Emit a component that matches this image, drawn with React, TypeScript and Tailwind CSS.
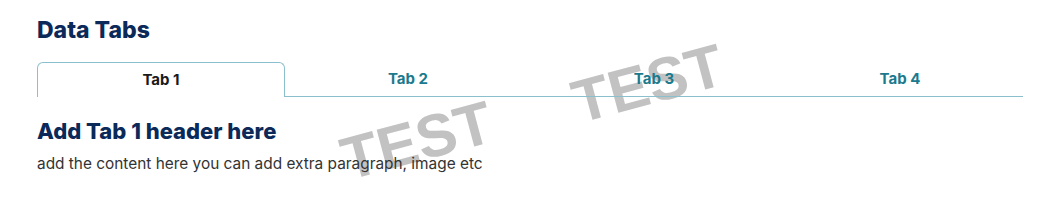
const tabs = ['Tab 1', 'Tab 2', 'Tab 3', 'Tab 4'];

export default function App() {
  const active = 0;

  return (
    <div className="relative min-h-[206px] bg-white pl-[37px] pr-[22px] pt-[16px] font-['Inter',sans-serif] overflow-hidden">
      {/* watermarks */}
      <div className="pointer-events-none absolute left-[417px] top-[141px] -translate-x-1/2 -translate-y-1/2 -rotate-[15deg] font-['Liberation_Sans',Arial,sans-serif] text-[60px] font-bold leading-none text-[#c2c2c2]">
        TEST
      </div>
      <div className="pointer-events-none absolute left-[648px] top-[84px] -translate-x-1/2 -translate-y-1/2 -rotate-[15deg] font-['Liberation_Sans',Arial,sans-serif] text-[60px] font-bold leading-none text-[#c2c2c2]">
        TEST
      </div>

      <div className="relative">
        <h2 className="text-[23px] font-extrabold leading-[28px] text-[#0b2a5a]">Data Tabs</h2>

        <div className="mt-[18px] flex">
          {tabs.map((t, i) => (
            <button
              key={t}
              className={
                i === active
                  ? 'h-[35px] flex-1 rounded-t-[6px] border border-b-0 border-[#8cbfcd] pt-[1px] text-[15px] font-bold text-[#1a1a1a]'
                  : 'h-[35px] flex-1 border-b border-[#8cbfcd] pt-[1px] text-[15px] font-bold text-[#1b7a8d]'
              }
            >
              {t}
            </button>
          ))}
        </div>

        <h3 className="mt-[20px] text-[22px] font-extrabold leading-[28px] text-[#0b2a5a]">Add Tab 1 header here</h3>
        <p className="mt-[7px] text-[15.4px] leading-[24px] text-[#333333]">
          add the content here you can add extra paragraph, image etc
        </p>
      </div>
    </div>
  );
}
